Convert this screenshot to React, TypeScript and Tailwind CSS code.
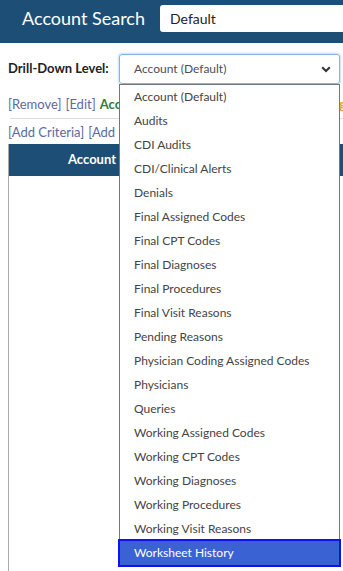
import React from "react";

const items = [
  "Account (Default)",
  "Audits",
  "CDI Audits",
  "CDI/Clinical Alerts",
  "Denials",
  "Final Assigned Codes",
  "Final CPT Codes",
  "Final Diagnoses",
  "Final Procedures",
  "Final Visit Reasons",
  "Pending Reasons",
  "Physician Coding Assigned Codes",
  "Physicians",
  "Queries",
  "Working Assigned Codes",
  "Working CPT Codes",
  "Working Diagnoses",
  "Working Procedures",
  "Working Visit Reasons",
  "Worksheet History",
];

export default function App() {
  return (
    <div className="relative w-[343px] h-[571px] overflow-hidden bg-white font-['Lato','Open_Sans',sans-serif]">
      {/* Header */}
      <div className="flex h-[43px] items-start bg-[#1d4f76] pl-[22px] pt-[5px]">
        <div className="whitespace-nowrap text-[18px] leading-[26px] text-white">Account Search</div>
        <div className="ml-[15px] flex h-[27px] w-[200px] shrink-0 items-center rounded-[3px] bg-white pl-[10px] text-[14px] text-[#222]">
          Default
        </div>
      </div>

      {/* Body */}
      <div className="pl-[8px]">
        <div className="mt-[11px] flex w-[332px] items-center">
          <div className="whitespace-nowrap text-[13px] font-bold text-[#222]">Drill-Down Level:</div>
          <div className="ml-auto flex h-[30px] w-[221px] shrink-0 items-center rounded-[3px] border border-[#80b5e8] pl-[14px] pr-[8px] text-[12px] text-[#495057] shadow-[0_0_2px_1px_rgba(128,181,232,0.45)]">
            <span>Account (Default)</span>
            <svg className="ml-auto" width="10" height="7" viewBox="0 0 10 7">
              <path d="M1.2 1.3 L5 5 L8.8 1.3" fill="none" stroke="#333" strokeWidth="2" />
            </svg>
          </div>
        </div>

        <div className="w-[335px] overflow-hidden">
          <div className="mt-[10px] flex w-[338px] items-center whitespace-nowrap text-[13px] leading-[20px]">
            <span className="text-[#5a6aa3]">[Remove]</span>
            <span className="ml-[4px] text-[#5a6aa3]">[Edit]</span>
            <span className="ml-[4px] font-bold text-[#2e7d32]">Account Default</span>
            <span className="ml-auto font-bold text-[#e2a128]">Setting</span>
          </div>
        </div>
        <div className="ml-[2px] mt-[4px] h-px bg-[#dcdcdc]" />
        <div className="mt-[3px] whitespace-nowrap text-[13px] leading-[20px]">
          <span className="text-[#5a6aa3]">[Add Criteria]</span>
          <span className="ml-[4px] text-[#5a6aa3]">[Add Column]</span>
        </div>

        {/* Table */}
        <div className="mt-[2px] border-l border-[#a9a9a9]">
          <div className="flex h-[32px] items-center bg-[#1d4f76] pl-[59px] text-[13px] font-bold text-white">
            Account Number
          </div>
          <div className="h-[420px]" />
        </div>
      </div>

      {/* Dropdown list */}
      <div className="absolute left-[119px] top-[84px] w-[221px] border border-[#767676] bg-white">
        {items.map((it) => {
          const sel = it === "Worksheet History";
          return (
            <div
              key={it}
              className={
                sel
                  ? "flex h-[24px] items-center bg-[#3a62d2] pl-[14px] text-[12px] text-white outline-2 outline-[#0a14f0]"
                  : "flex h-[24px] items-center pl-[14px] text-[12px] text-[#444]"
              }
            >
              {it}
            </div>
          );
        })}
      </div>
    </div>
  );
}
